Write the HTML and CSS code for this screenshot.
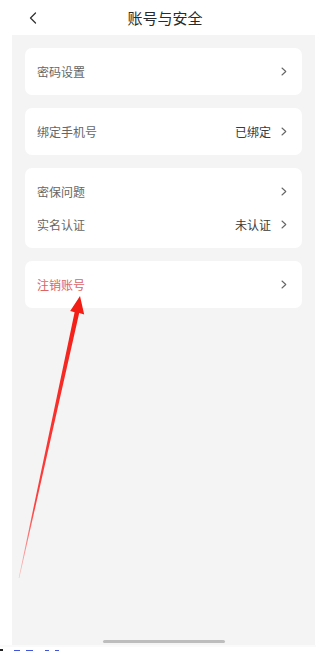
FILE: index.html
```html
<!DOCTYPE html>
<html lang="zh-CN">
<head>
<meta charset="utf-8">
<title>账号与安全</title>
<link rel="stylesheet" href="styles.css">
</head>
<body>
<div class="page">
  <header class="topbar">
    <svg class="back" width="8" height="12" viewBox="0 0 8 12"><path d="M6.5 1 L1.5 6 L6.5 11" fill="none" stroke="#333" stroke-width="1.3" stroke-linecap="round" stroke-linejoin="round"/></svg>
    <h1 class="title">账号与安全</h1>
  </header>
  <main class="content">
    <section class="card">
      <div class="row"><span class="label">密码设置</span><span class="right"><svg class="chev" width="6" height="9" viewBox="0 0 6 9"><path d="M1 1 L4.8 4.5 L1 8" fill="none" stroke="#666" stroke-width="1.1" stroke-linecap="round" stroke-linejoin="round"/></svg></span></div>
    </section>
    <section class="card">
      <div class="row"><span class="label">绑定手机号</span><span class="right"><span class="value">已绑定</span><svg class="chev" width="6" height="9" viewBox="0 0 6 9"><path d="M1 1 L4.8 4.5 L1 8" fill="none" stroke="#666" stroke-width="1.1" stroke-linecap="round" stroke-linejoin="round"/></svg></span></div>
    </section>
    <section class="card">
      <div class="row"><span class="label">密保问题</span><span class="right"><svg class="chev" width="6" height="9" viewBox="0 0 6 9"><path d="M1 1 L4.8 4.5 L1 8" fill="none" stroke="#666" stroke-width="1.1" stroke-linecap="round" stroke-linejoin="round"/></svg></span></div>
      <div class="row"><span class="label">实名认证</span><span class="right"><span class="value">未认证</span><svg class="chev" width="6" height="9" viewBox="0 0 6 9"><path d="M1 1 L4.8 4.5 L1 8" fill="none" stroke="#666" stroke-width="1.1" stroke-linecap="round" stroke-linejoin="round"/></svg></span></div>
    </section>
    <section class="card">
      <div class="row"><span class="label danger">注销账号</span><span class="right"><svg class="chev" width="6" height="9" viewBox="0 0 6 9"><path d="M1 1 L4.8 4.5 L1 8" fill="none" stroke="#666" stroke-width="1.1" stroke-linecap="round" stroke-linejoin="round"/></svg></span></div>
    </section>
    <div class="scrollbar"></div>
  </main>
  <footer class="strip">
    <span class="mark"></span>
    <span class="link l1"></span>
    <span class="link l2"></span>
    <span class="link l3"></span>
    <span class="link l4"></span>
  </footer>
  <svg class="arrow" width="316" height="651" viewBox="0 0 316 651">
    <defs>
      <linearGradient id="fade" x1="19" y1="578" x2="80" y2="297" gradientUnits="userSpaceOnUse">
        <stop offset="0" stop-color="#f33" stop-opacity="0.25"/>
        <stop offset="0.25" stop-color="#f22" stop-opacity="0.85"/>
        <stop offset="1" stop-color="#f21b12"/>
      </linearGradient>
    </defs>
    <polygon fill="url(#fade)" points="19.3,578 79.2,313 84.2,314.5 80,296 70.2,311 74.6,312.2 18.7,578"/>
  </svg>
</div>
</body>
</html>
```

FILE: styles.css
```css
html, body {
  margin: 0;
  padding: 0;
  background: #ffffff;
}

body {
  font-family: "Noto Sans CJK SC", "Noto Sans", "Liberation Sans", sans-serif;
  color: #333;
}

.page {
  position: relative;
  width: 316px;
  height: 651px;
  overflow: hidden;
}

.topbar {
  position: relative;
  height: 35px;
  display: flex;
  align-items: center;
  justify-content: center;
}

.back {
  position: absolute;
  left: 29px;
  top: 12px;
}

.title {
  margin: 0;
  font-size: 15px;
  font-weight: 400;
  color: #2a2a2a;
  line-height: 20px;
  margin-top: 1px;
  margin-left: 14px;
}

.content {
  margin-left: 12px;
  margin-right: 1px;
  height: 610px;
  box-sizing: border-box;
  background: #f4f4f4;
  padding: 13px 13px 2px 13px;
  display: flex;
  flex-direction: column;
  gap: 13px;
}

.card {
  background: #ffffff;
  border-radius: 7px;
  padding: 7px 15px 7px 12px;
}

.row {
  height: 33px;
  display: flex;
  align-items: center;
  justify-content: space-between;
}

.label {
  font-size: 12px;
  color: #666;
}

.label.danger {
  color: #dc6464;
}

.right {
  display: flex;
  align-items: center;
  gap: 10px;
}

.value {
  font-size: 12px;
  color: #3a3a3a;
}

.chev {
  display: block;
}

.scrollbar {
  margin-top: auto;
  align-self: center;
  width: 122px;
  height: 3px;
  border-radius: 2px;
  background: #bdbdbd;
}

.strip {
  height: 6px;
  border-top: 2px solid #fafafa;
  box-sizing: border-box;
  display: flex;
  align-items: flex-end;
  gap: 6px;
}

.mark {
  width: 3px;
  height: 2px;
  background: #222;
}

.link {
  height: 1px;
  background: #4455dd;
}

.l1 { width: 6px; margin-left: 5px; }
.l2 { width: 7px; }
.l3 { width: 4px; margin-left: 6px; }
.l4 { width: 4px; }

.arrow {
  position: absolute;
  left: 0;
  top: 0;
  pointer-events: none;
}
```
